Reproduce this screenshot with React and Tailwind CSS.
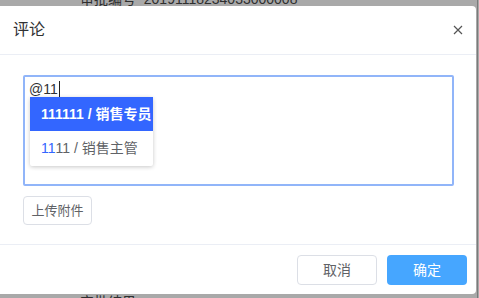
export default function App() {
  return (
    <div
      className="relative h-[298px] w-[479px] overflow-hidden bg-[#a9a9a9] text-[#303133]"
      style={{ fontFamily: '"Liberation Sans", "Noto Sans CJK SC", sans-serif' }}
    >
      {/* page content behind the mask */}
      <div className="absolute left-[80px] top-[-11px] text-[14px] text-[#2f2f2f] whitespace-nowrap">
        审批编号&nbsp;&nbsp;20191118234033000008
      </div>
      <div className="absolute left-[80px] top-[292px] text-[14px] text-[#2f2f2f] whitespace-nowrap">
        审批结果
      </div>
      <div className="absolute right-[1px] top-0 h-full w-px bg-[#7a7a7a]" />

      {/* dialog */}
      <div className="absolute left-0 top-[6px] flex h-[288px] w-[476px] flex-col rounded-tr-[4px] rounded-br-[4px] bg-white">
        <div className="flex h-[49px] shrink-0 items-center justify-between border-b border-[#ebeef5] pl-[13px] pr-[13px]">
          <span className="text-[16px] text-[#303133]">评论</span>
          <svg className="h-[10px] w-[10px]" viewBox="0 0 10 10" fill="none" stroke="#555" strokeWidth="1.2">
            <path d="M1 1l8 8M9 1L1 9" />
          </svg>
        </div>

        <div className="flex flex-1 flex-col pl-[23px] pr-[23px] pt-[20px]">
          <div className="relative h-[111px] w-[431px] rounded-[2px] border-2 border-[#91b5f9] px-[4px] pt-[2px]">
            <div className="flex items-center text-[14px] leading-[20px] text-[#303133]">
              @11<span className="ml-[1px] inline-block h-[16px] w-px bg-[#222]" />
            </div>
            <div className="absolute left-[5px] top-[20px] w-[123px] rounded-[2px] bg-white shadow-[0_1px_4px_rgba(0,0,0,0.22)]">
              <div className="flex h-[34px] items-center bg-[#3366ff] pl-[11px] text-[14px] font-bold text-white">
                111111 / 销售专员
              </div>
              <div className="flex h-[35px] items-center pl-[11px] text-[14px] text-[#606266]">
                <span className="text-[#3366ff]">11</span>11 / 销售主管
              </div>
            </div>
          </div>

          <button className="mt-[10px] h-[29px] w-[69px] rounded-[4px] border border-[#dcdfe6] text-[13px] text-[#606266]">
            上传附件
          </button>
        </div>

        <div className="flex h-[50px] shrink-0 items-start justify-end gap-[10px] border-t border-[#ebeef5] pr-[9px] pt-[10px]">
          <button className="h-[30px] w-[80px] rounded-[4px] border border-[#dcdfe6] text-[14px] text-[#606266]">
            取消
          </button>
          <button className="h-[30px] w-[80px] rounded-[4px] bg-[#46a6ff] text-[14px] text-white">
            确定
          </button>
        </div>
      </div>
    </div>
  );
}
